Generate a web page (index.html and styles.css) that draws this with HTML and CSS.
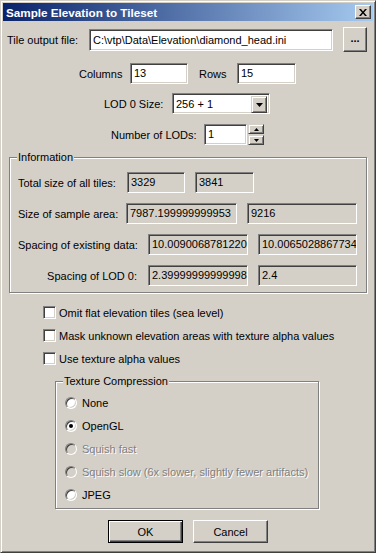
FILE: index.html
```html
<!DOCTYPE html>
<html lang="en">
<head>
  <meta charset="UTF-8" />
  <title>Sample Elevation to Tileset</title>
  <link rel="stylesheet" href="styles.css">
</head>
<body>
  <div class="window">
    <div class="titlebar">
      <span class="title">Sample Elevation to Tileset</span>
      <span class="close-btn">
        <svg width="8" height="7" viewBox="0 0 8 7"><path d="M0 0h2l2 2.5L6 0h2L5 3.5 8 7H6L4 4.5 2 7H0l3-3.5z" fill="#000"/></svg>
      </span>
    </div>

    <div class="content">
      <div class="row file-row">
        <span class="lbl file-lbl">Tile output file:</span>
        <div class="edit file-edit">C:\vtp\Data\Elevation\diamond_head.ini</div>
        <div class="btn browse-btn">...</div>
      </div>

      <div class="row size-row">
        <span class="lbl cols-lbl">Columns</span>
        <div class="edit cols-edit">13</div>
        <span class="lbl rows-lbl">Rows</span>
        <div class="edit rows-edit">15</div>
      </div>

      <div class="row lod-row">
        <span class="lbl lod-lbl">LOD 0 Size:</span>
        <div class="edit combo">
          <span class="combo-text">256 + 1</span>
          <span class="combo-btn">
            <svg width="7" height="4" viewBox="0 0 7 4"><path d="M0 0h7L3.5 4z" fill="#000"/></svg>
          </span>
        </div>
      </div>

      <div class="row num-row">
        <span class="lbl num-lbl">Number of LODs:</span>
        <div class="edit num-edit">1</div>
        <div class="spin">
          <span class="spin-btn"><svg width="5" height="3" viewBox="0 0 5 3"><path d="M0 3h5L2.5 0z" fill="#000"/></svg></span>
          <span class="spin-btn"><svg width="5" height="3" viewBox="0 0 5 3"><path d="M0 0h5L2.5 3z" fill="#000"/></svg></span>
        </div>
      </div>

      <div class="group info-group">
        <span class="legend">Information</span>
        <div class="info-row">
          <span class="lbl info-lbl">Total size of all tiles:</span>
          <div class="edit ro w58">3329</div>
          <div class="edit ro w59 gap">3841</div>
        </div>
        <div class="info-row">
          <span class="lbl info-lbl area-lbl">Size of sample area:</span>
          <div class="edit ro w111">7987.199999999953</div>
          <div class="edit ro w110 gap">9216</div>
        </div>
        <div class="info-row">
          <span class="lbl info-lbl wide-lbl">Spacing of existing data:</span>
          <div class="edit ro w100">10.0090068781220</div>
          <div class="edit ro w99 gap">10.0065028867734</div>
        </div>
        <div class="info-row">
          <span class="lbl info-lbl wide-lbl right">Spacing of LOD 0:</span>
          <div class="edit ro w100">2.39999999999998</div>
          <div class="edit ro w99 gap">2.4</div>
        </div>
      </div>

      <div class="checks">
        <div class="check-row"><span class="checkbox"></span><span>Omit flat elevation tiles (sea level)</span></div>
        <div class="check-row"><span class="checkbox"></span><span>Mask unknown elevation areas with texture alpha values</span></div>
        <div class="check-row"><span class="checkbox"></span><span>Use texture alpha values</span></div>
      </div>

      <div class="group tex-group">
        <span class="legend">Texture Compression</span>
        <div class="radio-row"><span class="radio"></span><span>None</span></div>
        <div class="radio-row"><span class="radio checked"></span><span>OpenGL</span></div>
        <div class="radio-row disabled"><span class="radio"></span><span>Squish fast</span></div>
        <div class="radio-row disabled"><span class="radio"></span><span>Squish slow (6x slower, slightly fewer artifacts)</span></div>
        <div class="radio-row"><span class="radio"></span><span>JPEG</span></div>
      </div>

      <div class="buttons">
        <div class="btn default-btn">OK</div>
        <div class="btn">Cancel</div>
      </div>
    </div>
  </div>
</body>
</html>
```

FILE: styles.css
```css
* { box-sizing: border-box; margin: 0; padding: 0; }

body {
  font-family: 'Liberation Sans', Arial, sans-serif;
  font-size: 11px;
  color: #000;
  background: #d4d0c8;
  width: 376px;
  height: 553px;
  overflow: hidden;
}

.window {
  width: 376px;
  height: 553px;
  background: #d4d0c8;
  border: 1px solid;
  border-color: #d4d0c8 #404040 #404040 #d4d0c8;
  box-shadow: inset 1px 1px 0 #fff, inset -1px -1px 0 #808080;
  padding: 2px;
}

/* title bar */
.titlebar {
  height: 18px;
  display: flex;
  align-items: center;
  justify-content: space-between;
  background: linear-gradient(to right, #0a246a, #a6caf0);
  padding: 0 2px 0 3px;
}

.title {
  color: #fff;
  font-weight: bold;
  font-size: 11.7px;
}

.close-btn {
  width: 16px;
  height: 14px;
  display: flex;
  align-items: center;
  justify-content: center;
  background: #d4d0c8;
  border: 1px solid;
  border-color: #fff #404040 #404040 #fff;
  box-shadow: inset -1px -1px 0 #808080;
}

.content {
  padding: 0 0 0 4px;
}

/* generic pieces */
.row {
  display: flex;
  align-items: center;
}

.lbl {
  flex: none;
  white-space: nowrap;
}

.edit {
  flex: none;
  height: 21px;
  background: #fff;
  border: 1px solid;
  border-color: #808080 #fff #fff #808080;
  box-shadow: inset 1px 1px 0 #404040, inset -1px -1px 0 #d4d0c8;
  padding: 0 3px;
  line-height: 19px;
  white-space: nowrap;
  overflow: hidden;
}

.edit.ro { background: #d4d0c8; }

.btn {
  flex: none;
  display: flex;
  align-items: center;
  justify-content: center;
  width: 75px;
  height: 23px;
  background: #d4d0c8;
  border: 1px solid;
  border-color: #fff #404040 #404040 #fff;
  box-shadow: inset -1px -1px 0 #808080;
}

.default-btn {
  border-color: #000;
  box-shadow: inset 1px 1px 0 #fff, inset -1px -1px 0 #404040, inset -2px -2px 0 #808080;
}

/* rows */
.file-row { margin-top: 6px; height: 25px; }
.file-lbl { width: 82px; }
.file-edit { width: 244px; height: 22px; line-height: 20px; }
.browse-btn { width: 24px; height: 25px; margin-left: 10px; font-weight: bold; padding-bottom: 3px; }

.size-row { margin-top: 11px; height: 21px; }
.cols-lbl { margin-left: 72px; width: 51px; }
.cols-edit { width: 58px; }
.rows-lbl { margin-left: 11px; width: 38px; }
.rows-edit { width: 59px; }

.lod-row { margin-top: 9px; height: 21px; }
.lod-lbl { margin-left: 97px; width: 68px; }
.combo { width: 98px; display: flex; justify-content: space-between; padding: 2px 2px 2px 3px; line-height: 17px; }
.combo-btn {
  width: 16px;
  height: 17px;
  display: flex;
  align-items: center;
  justify-content: center;
  background: #d4d0c8;
  border: 1px solid;
  border-color: #d4d0c8 #404040 #404040 #d4d0c8;
  box-shadow: inset 1px 1px 0 #fff, inset -1px -1px 0 #808080;
}

.num-row { margin-top: 10px; height: 21px; }
.num-lbl { margin-left: 104px; width: 93px; }
.num-edit { width: 43px; }
.spin { margin-left: 1px; width: 16px; height: 21px; display: flex; flex-direction: column; gap: 1px; }
.spin-btn {
  flex: 1;
  display: flex;
  align-items: center;
  justify-content: center;
  background: #d4d0c8;
  border: 1px solid;
  border-color: #d4d0c8 #404040 #404040 #d4d0c8;
  box-shadow: inset 1px 1px 0 #fff, inset -1px -1px 0 #808080;
}

/* group boxes */
.group {
  position: relative;
  border: 1px solid #808080;
  box-shadow: 1px 1px 0 #fff, inset 1px 1px 0 #fff;
}

.legend {
  position: absolute;
  top: -7px;
  left: 7px;
  padding: 0 1px;
  background: #d4d0c8;
  line-height: 13px;
}

.info-group {
  margin: 12px 0 0 2px;
  width: 358px;
  height: 136px;
  padding: 14px 0 0 8px;
  display: flex;
  flex-direction: column;
  gap: 10px;
}

.info-row { display: flex; align-items: center; height: 21px; }
.info-lbl { width: 109px; }
.area-lbl { width: 108px; }
.wide-lbl { width: 130px; }
.right { text-align: right; padding-right: 11px; }
.gap { margin-left: 10px; }
.w58 { width: 58px; }
.w59 { width: 59px; }
.w111 { width: 111px; }
.w110 { width: 110px; }
.w100 { width: 100px; }
.w99 { width: 99px; }

/* check boxes */
.checks {
  margin: 13px 0 0 36px;
  display: flex;
  flex-direction: column;
  gap: 10px;
}

.check-row { display: flex; align-items: center; gap: 3px; height: 13px; }

.checkbox {
  width: 13px;
  height: 13px;
  background: #fff;
  border: 1px solid;
  border-color: #808080 #fff #fff #808080;
  box-shadow: inset 1px 1px 0 #404040, inset -1px -1px 0 #d4d0c8;
}

/* radio buttons */
.tex-group {
  margin: 16px 0 0 48px;
  width: 264px;
  height: 128px;
  padding: 14px 0 0 9px;
  display: flex;
  flex-direction: column;
  gap: 10px;
}

.radio-row { display: flex; align-items: center; gap: 5px; height: 13px; }

.radio {
  position: relative;
  width: 12px;
  height: 12px;
  border-radius: 50%;
  background: #fff;
  border: 1px solid;
  border-color: #808080 #fff #fff #808080;
  box-shadow: inset 1px 1px 0 #404040, inset -1px -1px 0 #d4d0c8;
}

.radio.checked::after {
  content: "";
  position: absolute;
  left: 3px;
  top: 3px;
  width: 4px;
  height: 4px;
  border-radius: 50%;
  background: #000;
}

.disabled { color: #808080; text-shadow: 1px 1px 0 #fff; }
.disabled .radio { background: #d4d0c8; }

/* bottom buttons */
.buttons {
  margin-top: 11px;
  display: flex;
  justify-content: center;
  gap: 10px;
  padding-right: 4px;
}
```
